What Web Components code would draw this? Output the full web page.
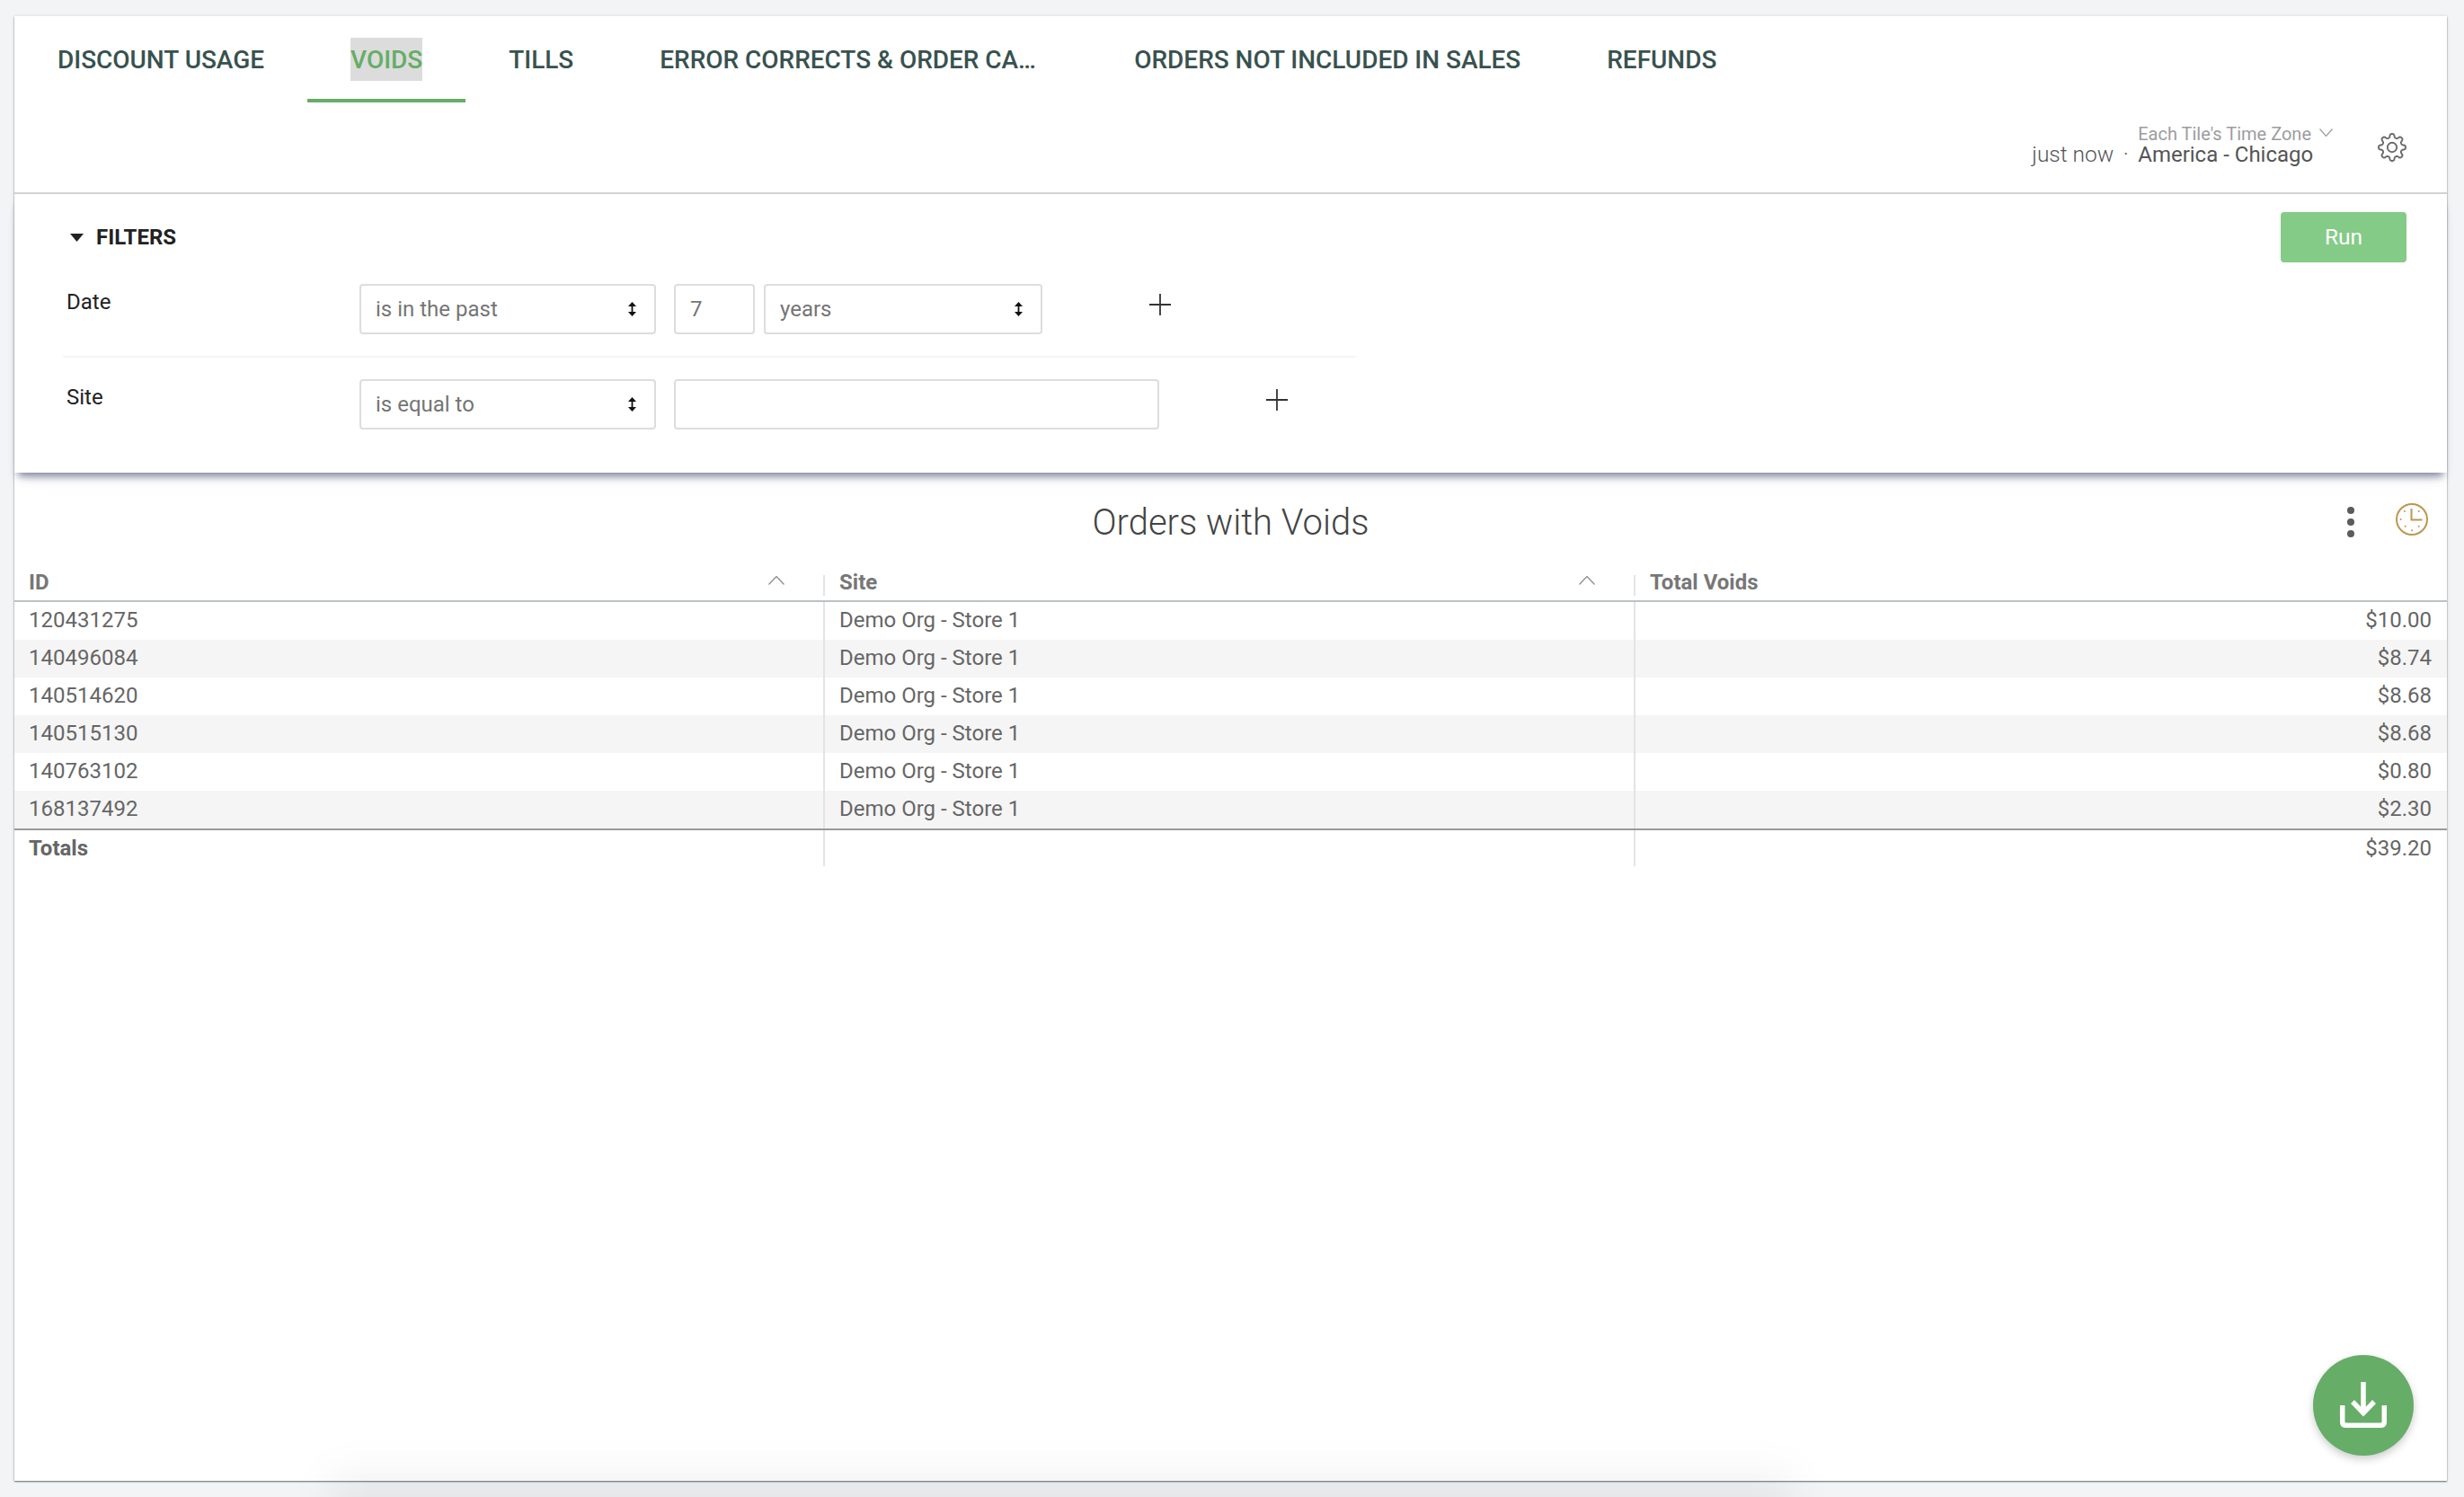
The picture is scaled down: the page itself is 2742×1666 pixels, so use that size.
<!DOCTYPE html>
<html lang="en"><head><meta charset="utf-8"><title>Orders with Voids</title>
<style>
html,body{margin:0;height:100%}
body{background:#f3f4f6;font-family:Roboto,"Liberation Sans",sans-serif;padding:18px 19px 18px 16px;box-sizing:border-box;overflow:hidden}
</style></head><body>
<report-card>
  <tab-bar>
    <tab-item>DISCOUNT USAGE</tab-item>
    <tab-item active>VOIDS</tab-item>
    <tab-item>TILLS</tab-item>
    <tab-item style="width:528px">ERROR CORRECTS &amp; ORDER CA…</tab-item>
    <tab-item>ORDERS NOT INCLUDED IN SALES</tab-item>
    <tab-item>REFUNDS</tab-item>
  </tab-bar>
  <status-bar></status-bar>
  <filter-panel>
    <filter-row label="Date">
      <select-box value="is in the past" style="width:330px"></select-box>
      <text-box value="7" style="width:90px;margin-left:20px"></text-box>
      <select-box value="years" style="width:310px;margin-left:10px"></select-box>
      <plus-icon style="margin-left:119px"></plus-icon>
    </filter-row>
    <filter-row label="Site" last>
      <select-box value="is equal to" style="width:330px"></select-box>
      <text-box value="" style="width:540px;margin-left:20px"></text-box>
      <plus-icon style="margin-left:119px"></plus-icon>
    </filter-row>
  </filter-panel>
  <table-panel title="Orders with Voids">
    <data-row head><sort-cell>ID</sort-cell><sort-cell>Site</sort-cell><span>Total Voids</span></data-row>
    <data-row><span>120431275</span><span>Demo Org - Store 1</span><span>$10.00</span></data-row>
    <data-row alt><span>140496084</span><span>Demo Org - Store 1</span><span>$8.74</span></data-row>
    <data-row><span>140514620</span><span>Demo Org - Store 1</span><span>$8.68</span></data-row>
    <data-row alt><span>140515130</span><span>Demo Org - Store 1</span><span>$8.68</span></data-row>
    <data-row><span>140763102</span><span>Demo Org - Store 1</span><span>$0.80</span></data-row>
    <data-row alt><span>168137492</span><span>Demo Org - Store 1</span><span>$2.30</span></data-row>
    <data-row total><span>Totals</span><span></span><span>$39.20</span></data-row>
  </table-panel>
  <download-fab></download-fab>
</report-card>
<script>
function def(name, html){
  class C extends HTMLElement{
    constructor(){super();this.attachShadow({mode:'open'});if(typeof html!=='function')this.shadowRoot.innerHTML=html;}
    connectedCallback(){ if(typeof html==='function'){this.shadowRoot.innerHTML=html(this);} }
  }
  customElements.define(name,C);
}
function gearPath(cx,cy,base,amp,n){
  let d='';const S=192;
  for(let i=0;i<S;i++){
    const t=i/S*Math.PI*2;
    const q=base+amp*Math.tanh(1.8*Math.cos(n*t))/Math.tanh(1.8);
    const x=(cx+q*Math.sin(t)).toFixed(2),y=(cy-q*Math.cos(t)).toFixed(2);
    d+=(i?'L':'M')+x+' '+y;
  }
  return d+'Z';
}
def('report-card',`<style>:host{display:flex;flex-direction:column;position:relative;height:1630px;background:#fff;box-shadow:0 1px 1.5px rgba(0,0,0,.55),0 0 4px rgba(0,0,0,.1)}
.bloom{position:absolute;left:352px;width:1626px;bottom:-92px;height:100px;background:rgba(0,0,0,.05);filter:blur(22px);pointer-events:none}
</style><slot></slot><div class="bloom"></div>`);
def('tab-bar',`<style>:host{display:flex;height:96px;flex:none}</style><slot></slot>`);
def('tab-item',`<style>:host{display:block;flex:none;box-sizing:border-box;height:96px;padding:24px 48px 0;font:500 28px/50px Roboto,sans-serif;letter-spacing:-.03px;color:#38524f;white-space:nowrap}
:host([active]){color:#66ad66;border-bottom:4px solid #66ad66}
:host([active]) span{background:#dcdcdc}
span{display:inline-block;height:48px;vertical-align:top}</style><span><slot></slot></span>`);
def('status-bar',`<style>:host{display:flex;flex:none;justify-content:flex-end;box-sizing:border-box;height:102px;padding:24px 45px 0 0;border-bottom:2px solid #d2d2d7;font:400 24px/23px Roboto,sans-serif;color:#555}
.now{font-weight:300;font-size:24.5px;margin-top:22px}
.dot{font-weight:300;margin:23px 10.500px 0 10.500px}
.tz{display:flex;flex-direction:column}
.each{font-size:20px;color:#9c9ca1;display:flex;align-items:flex-start}
.each svg{margin:5px 0 0 9px}
.gear{margin:10px 0 0 50px}
</style><span class="now">just now</span><span class="dot">·</span>
<div class="tz"><div class="each"><span>Each Tile's Time Zone</span><svg width="15" height="9" viewBox="0 0 15 9" fill="none" stroke="#9c9ca1" stroke-width="1.2"><path d="M.5.5 7.5 8.5 14.500 .5"/></svg></div><div>America - Chicago</div></div>
<svg class="gear" width="32" height="32" viewBox="0 0 32 32" fill="none" stroke="#6a6a6a" stroke-width="1.9" stroke-linejoin="round"><path d="${gearPath(16,16,13,2,8)}"/><circle cx="16" cy="16" r="5.200"/></svg>`);
def('filter-panel',`<style>:host{display:block;flex:none;position:relative;z-index:1;box-sizing:border-box;height:310px;padding:20px 45px 0 54px;background:#fff;box-shadow:0 8px 8px -4px rgba(70,80,110,.6),0 12px 14px -8px rgba(70,80,110,.2)}
header{display:flex;justify-content:space-between;align-items:center;height:56px;margin-bottom:24px}
.t{display:flex;align-items:center;font:700 24px/31px Roboto,sans-serif;color:#222;padding-left:7.500px}
.t svg{margin-right:14.500px}
button{all:unset;box-sizing:border-box;width:140px;height:56px;border-radius:4px;background:#84cb87;color:#fff;font:400 24.5px/56px Roboto,sans-serif;text-align:center}
.rows{width:1439px}
</style><header><div class="t"><svg width="15" height="9" viewBox="0 0 15 9"><path d="M0 0H15L7.500 9Z" fill="#222"/></svg>FILTERS</div><button>Run</button></header><div class="rows"><slot></slot></div>`);
def('filter-row',h=>`<style>:host{display:flex;align-items:flex-start}
:host(:not([last])){padding-bottom:24px;border-bottom:2px solid #f5f5f5;margin-bottom:24px}
.l{width:330px;box-sizing:border-box;padding-left:4px;flex:none;font:400 24px/40px Roboto,sans-serif;color:#222}
</style><div class="l">${h.getAttribute('label')||''}</div><slot></slot>`);
def('select-box',h=>`<style>:host{display:flex;flex:none;align-items:center;justify-content:space-between;box-sizing:border-box;height:56px;padding:0 20px 0 16px;border:2px solid #ddd;border-radius:4px;background:#fff;font:400 24px/52px Roboto,sans-serif;color:#757575}
</style><span>${h.getAttribute('value')||''}</span><svg width="9" height="16" viewBox="0 0 9 16"><path d="M4.500 0 9 5H5.400V11H9L4.500 16 0 11H3.600V5H0Z" fill="#111"/></svg>`);
def('text-box',h=>`<style>:host{display:block;flex:none;box-sizing:border-box;height:56px;padding:0 16px;border:2px solid #ddd;border-radius:4px;background:#fff;font:400 24px/52px Roboto,sans-serif;color:#757575}
</style>${h.getAttribute('value')||''}`);
def('plus-icon',`<style>:host{display:block;flex:none;width:24px;height:24px;margin-top:11px}svg{display:block}</style><svg width="24" height="24" viewBox="0 0 24 24" stroke="#333" stroke-width="1.800"><path d="M12 0V24M0 12H24"/></svg>`);
def('table-panel',h=>`<style>:host{display:block;flex:1}
.title{display:grid;grid-template-columns:1fr auto 1fr;align-items:center;height:112px}
h1{grid-column:2;margin:0;font:300 40px/46px Roboto,sans-serif;color:#444}
.a{grid-column:3;justify-self:end;display:flex;align-items:center;gap:46px;padding-right:21px}
.d{margin-bottom:2px}.c{margin-bottom:8px}
</style><div class="title"><h1>${h.getAttribute('title')||''}</h1><div class="a">
<svg class="d" width="8" height="34" viewBox="0 0 8 34" fill="#5b5b5b"><circle cx="4" cy="4" r="4"/><circle cx="4" cy="17" r="4"/><circle cx="4" cy="30" r="4"/></svg>
<svg class="c" width="36" height="36" viewBox="-18 -18 36 36" fill="none" stroke="#bd9650" stroke-width="2"><circle r="17"/><path d="M-.500 -12V0.500H11.500"/><g fill="#bd9650" stroke="none"><circle cx="7.700" cy="-9" r="1"/><circle cx="-8" cy="-9" r="1"/><circle cx="-12.300" cy="0" r="1"/><circle cx="-7.300" cy="7.700" r="1"/><circle cx="0" cy="12.300" r="1"/><circle cx="7.700" cy="7.700" r="1"/></g></svg>
</div></div><slot></slot>`);
def('data-row',`<style>:host{display:grid;grid-template-columns:900px 902px 1fr;height:42px;font:400 24px/41px Roboto,sans-serif;color:#666;background:#fff}
:host([alt]){background:#f5f5f5}
:host([head]){height:32px;font-weight:700;color:#777;border-bottom:2px solid #bcc2c6;box-sizing:border-box}
:host([total]){height:42px;font-weight:400;border-top:2px solid #999;box-sizing:border-box;line-height:40px}
::slotted(*){box-sizing:border-box;padding:0 17px 0 16px;border-left:2px solid #e4e4e4;white-space:nowrap}
::slotted(:first-child){border-left:0}
::slotted(:last-child){text-align:right;padding-right:17px}
:host([head]) ::slotted(*){height:23px;margin-top:2px;line-height:16px}
:host([head]) ::slotted(:last-child){text-align:left}
:host([total]) ::slotted(:first-child){font-weight:700}
</style><slot></slot>`);
def('sort-cell',`<style>:host{display:flex;justify-content:space-between}svg{margin:1px 26px 0 0}</style><slot></slot><svg width="18" height="10" viewBox="0 0 18 10" fill="none" stroke="#888" stroke-width="1.200"><path d="M.5 9.500 9 .5 17.500 9.500"/></svg>`);
def('download-fab',`<style>:host{position:absolute;right:37px;bottom:28px;width:112px;height:112px;border-radius:50%;background:#66ad68;box-shadow:0 4px 10px rgba(0,0,0,.2);display:flex;align-items:center;justify-content:center}</style>
<svg width="52" height="52" viewBox="0 0 52 52" fill="none" stroke="#fff" stroke-width="5.500"><path d="M26 0V36M14 22 26 34.500 38 22"/><path d="M2.700 26V44Q2.700 48.300 7 48.300H45Q49.300 48.300 49.300 44V26"/></svg>`);
</script></body></html>
